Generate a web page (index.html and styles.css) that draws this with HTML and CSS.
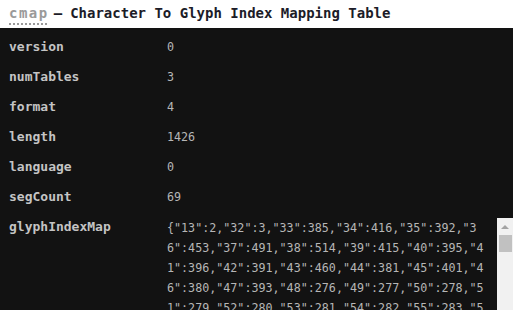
FILE: index.html
```html
<!DOCTYPE html>
<html lang="en">
<head>
    <meta charset="UTF-8">
    <title>cmap table</title>
    <link rel="stylesheet" href="styles.css">
</head>
<body>
    <div class="table-header">
        <abbr class="tag" title="cmap">cmap</abbr>
        <span class="dash">–</span>
        <span class="title">Character To Glyph Index Mapping Table</span>
    </div>

    <div class="fields">
        <div class="row"><span class="label">version</span><span class="value">0</span></div>
        <div class="row"><span class="label">numTables</span><span class="value">3</span></div>
        <div class="row"><span class="label">format</span><span class="value">4</span></div>
        <div class="row"><span class="label">length</span><span class="value">1426</span></div>
        <div class="row"><span class="label">language</span><span class="value">0</span></div>
        <div class="row"><span class="label">segCount</span><span class="value">69</span></div>
        <div class="row">
            <span class="label">glyphIndexMap</span>
            <div class="map-box">
                <div class="map-text">{"13":2,"32":3,"33":385,"34":416,"35":392,"36":453,"37":491,"38":514,"39":415,"40":395,"41":396,"42":391,"43":460,"44":381,"45":401,"46":380,"47":393,"48":276,"49":277,"50":278,"51":279,"52":280,"53":281,"54":282,"55":283,"56":284,"57":285,"58":286,"59":287,"60":288,"61":289,"62":290,"63":291,"64":292,"65":293}</div>
                <div class="scrollbar">
                    <span class="arrow"></span>
                    <span class="thumb"></span>
                </div>
            </div>
        </div>
    </div>
</body>
</html>
```

FILE: styles.css
```css
* {
    margin: 0;
    padding: 0;
    box-sizing: border-box;
}

html, body {
    background-color: #121212;
    height: 100%;
    overflow: hidden;
}

body {
    font-family: 'DejaVu Sans Mono', 'Liberation Mono', monospace;
}

.table-header {
    display: flex;
    align-items: baseline;
    background-color: #ffffff;
    height: 28px;
    padding: 3px 9px 0;
    font-size: 14px;
    font-weight: 700;
    line-height: 20px;
    color: #1c1c28;
    white-space: nowrap;
}

.tag {
    color: #9a9a9a;
    letter-spacing: 1.5px;
    text-decoration: underline dotted #9a9a9a 2px;
    text-underline-offset: 5px;
}

.dash {
    margin: 0 8px 0 5px;
}

.fields {
    padding-top: 4px;
}

.row {
    display: flex;
    align-items: flex-start;
    padding: 4px 0 4px 9px;
    line-height: 22px;
}

.label {
    width: 158px;
    flex-shrink: 0;
    font-size: 13px;
    font-weight: 700;
    color: #c4c4c4;
}

.value {
    font-size: 11.7px;
    color: #b6b6b6;
}

.map-box {
    display: flex;
    flex: 1;
    height: 200px;
    margin-top: 2px;
}

.map-text {
    width: 320px;
    font-size: 11.7px;
    line-height: 20px;
    color: #b6b6b6;
    word-break: break-all;
    overflow: hidden;
}

.scrollbar {
    margin-left: auto;
    width: 16px;
    background-color: #f1f1f1;
    display: flex;
    flex-direction: column;
    align-items: center;
}

.arrow {
    margin-top: 7px;
    width: 0;
    height: 0;
    border-left: 4px solid transparent;
    border-right: 4px solid transparent;
    border-bottom: 4px solid #a3a3a3;
}

.thumb {
    margin-top: 6px;
    width: 13px;
    height: 17px;
    background-color: #c1c1c1;
}
```
